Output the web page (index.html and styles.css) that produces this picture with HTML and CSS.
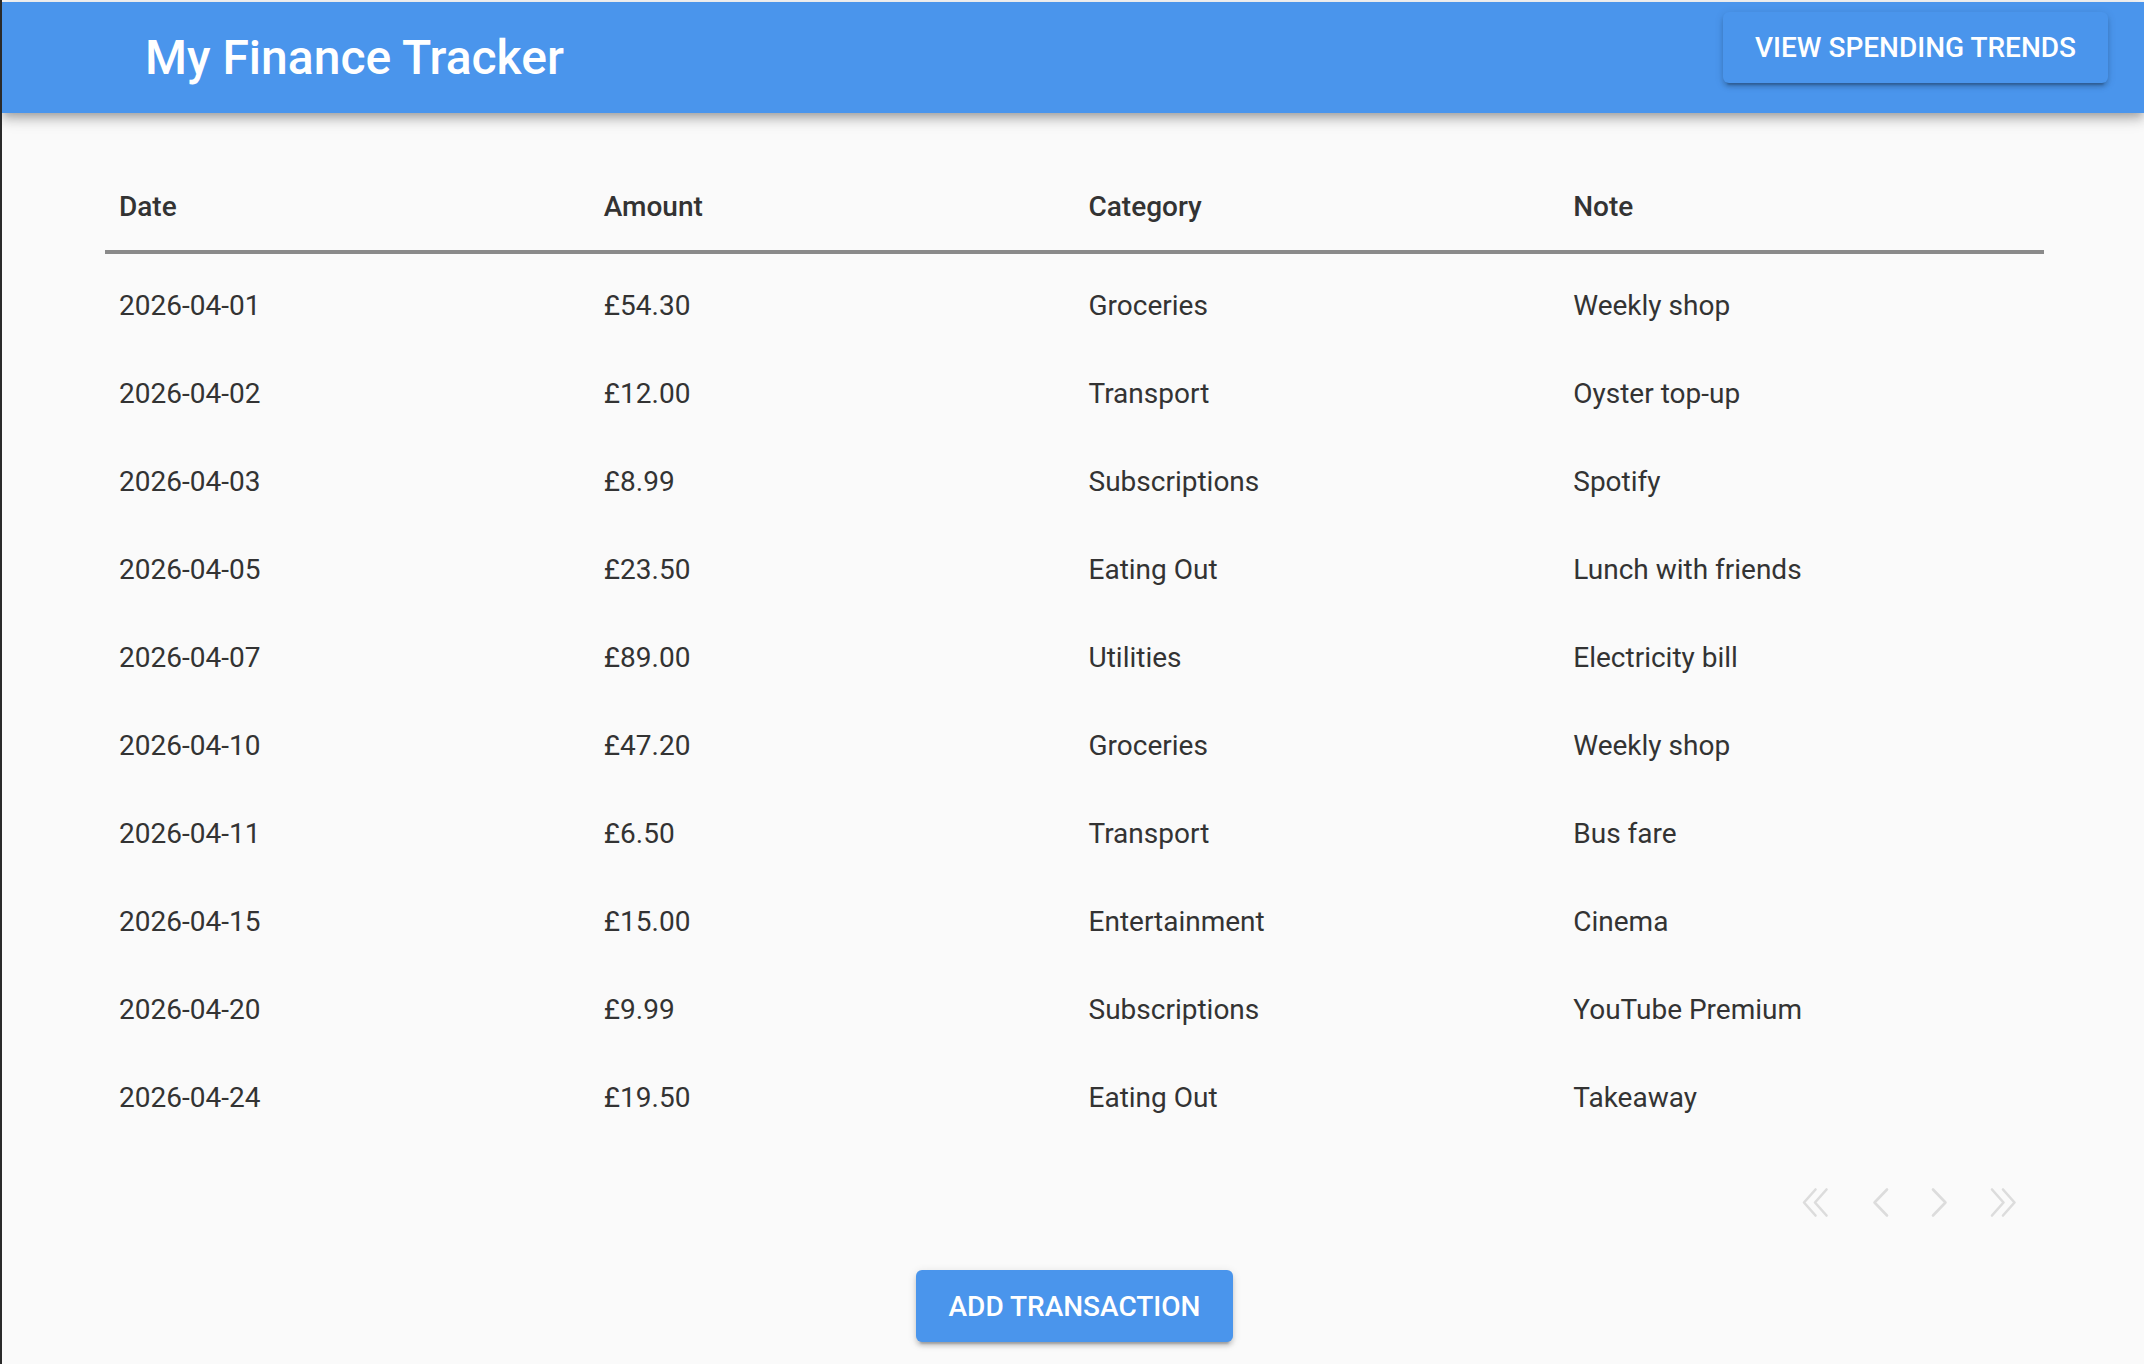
FILE: index.html
```html
<!DOCTYPE html>
<html lang="en">
<head>
<meta charset="utf-8">
<title>My Finance Tracker</title>
<link rel="stylesheet" href="styles.css">
</head>
<body>
<header class="appbar">
  <h1 class="title">My Finance Tracker</h1>
  <button class="btn btn-bar" type="button">View Spending Trends</button>
</header>
<main class="content">
  <div class="table" role="table">
    <div class="row head" role="row">
      <div class="cell" role="columnheader">Date</div>
      <div class="cell" role="columnheader">Amount</div>
      <div class="cell" role="columnheader">Category</div>
      <div class="cell" role="columnheader">Note</div>
    </div>
    <div class="tbody">
      <div class="row" role="row"><div class="cell">2026-04-01</div><div class="cell">£54.30</div><div class="cell">Groceries</div><div class="cell">Weekly shop</div></div>
      <div class="row" role="row"><div class="cell">2026-04-02</div><div class="cell">£12.00</div><div class="cell">Transport</div><div class="cell">Oyster top-up</div></div>
      <div class="row" role="row"><div class="cell">2026-04-03</div><div class="cell">£8.99</div><div class="cell">Subscriptions</div><div class="cell">Spotify</div></div>
      <div class="row" role="row"><div class="cell">2026-04-05</div><div class="cell">£23.50</div><div class="cell">Eating Out</div><div class="cell">Lunch with friends</div></div>
      <div class="row" role="row"><div class="cell">2026-04-07</div><div class="cell">£89.00</div><div class="cell">Utilities</div><div class="cell">Electricity bill</div></div>
      <div class="row" role="row"><div class="cell">2026-04-10</div><div class="cell">£47.20</div><div class="cell">Groceries</div><div class="cell">Weekly shop</div></div>
      <div class="row" role="row"><div class="cell">2026-04-11</div><div class="cell">£6.50</div><div class="cell">Transport</div><div class="cell">Bus fare</div></div>
      <div class="row" role="row"><div class="cell">2026-04-15</div><div class="cell">£15.00</div><div class="cell">Entertainment</div><div class="cell">Cinema</div></div>
      <div class="row" role="row"><div class="cell">2026-04-20</div><div class="cell">£9.99</div><div class="cell">Subscriptions</div><div class="cell">YouTube Premium</div></div>
      <div class="row" role="row"><div class="cell">2026-04-24</div><div class="cell">£19.50</div><div class="cell">Eating Out</div><div class="cell">Takeaway</div></div>
    </div>
  </div>
  <nav class="pager" aria-label="Pagination">
    <button class="pg" type="button" aria-label="First page">
      <svg viewBox="0 0 48 48" width="48" height="48"><polyline points="27.5,10.5 16,23.5 27.5,36.5"/><polyline points="38.5,10.5 27,23.5 38.5,36.5"/></svg>
    </button>
    <button class="pg pg-prev" type="button" aria-label="Previous page">
      <svg viewBox="0 0 48 48" width="48" height="48"><polyline points="30,10.5 17.5,23.5 30,36.5"/></svg>
    </button>
    <button class="pg pg-next" type="button" aria-label="Next page">
      <svg viewBox="0 0 48 48" width="48" height="48"><polyline points="18,10.5 30.5,23.5 18,36.5"/></svg>
    </button>
    <button class="pg pg-last" type="button" aria-label="Last page">
      <svg viewBox="0 0 48 48" width="48" height="48"><polyline points="10,10.5 21.5,23.5 10,36.5"/><polyline points="21,10.5 32.5,23.5 21,36.5"/></svg>
    </button>
  </nav>
  <div class="actions">
    <button class="btn btn-add" type="button">Add Transaction</button>
  </div>
</main>
</body>
</html>
```

FILE: styles.css
```css
* { box-sizing: border-box; }

html, body {
  margin: 0;
  height: 100%;
}

body {
  background: #fafafa;
  border-left: 2px solid #2a2a2a;
  padding-top: 2px;
  font-family: Roboto, "Liberation Sans", Arial, sans-serif;
  color: #333333;
  overflow: hidden;
}

.appbar {
  height: 111px;
  background: #4a95ec;
  display: flex;
  align-items: center;
  justify-content: space-between;
  padding: 0 36px 0 143px;
  box-shadow: 0 4px 8px -2px rgba(0,0,0,0.2), 0 8px 10px 0 rgba(0,0,0,0.14), 0 2px 20px 0 rgba(0,0,0,0.12);
  position: relative;
  z-index: 1;
}

.title {
  margin: 0;
  font-size: 48px;
  font-weight: 500;
  color: #ffffff;
  line-height: 1;
  letter-spacing: 0;
}

.btn {
  font-family: Roboto, "Liberation Sans", Arial, sans-serif;
  font-size: 28px;
  font-weight: 500;
  text-transform: uppercase;
  letter-spacing: 0;
  color: #ffffff;
  background: #4a95ec;
  border: 0;
  border-radius: 6px;
  display: inline-flex;
  align-items: center;
  justify-content: center;
  cursor: pointer;
  box-shadow: 0 6px 2px -4px rgba(0,0,0,0.2), 0 4px 4px 0 rgba(0,0,0,0.14), 0 2px 10px 0 rgba(0,0,0,0.12);
}

.btn-bar {
  align-self: flex-start;
  margin-top: 10px;
  height: 71px;
  padding: 0 32px;
}

.content {
  padding: 47px 100px 0 103px;
}

.row {
  display: grid;
  grid-template-columns: repeat(4, 1fr);
  align-items: center;
  height: 88px;
  font-size: 28px;
}

.cell {
  padding-left: 14px;
  white-space: nowrap;
}

.row.head {
  height: 94px;
  padding-top: 3px;
  border-bottom: 4px solid #8a8a8a;
  font-weight: 500;
}

.tbody {
  padding-top: 7px;
}

.pager {
  display: flex;
  justify-content: flex-end;
  margin-top: 38px;
  padding-right: 14px;
}

.pg {
  width: 48px;
  height: 48px;
  padding: 0;
  border: 0;
  background: transparent;
  display: flex;
  align-items: center;
  justify-content: center;
}

.pg svg {
  display: block;
  fill: none;
  stroke: #dcdcdc;
  stroke-width: 2.6;
  stroke-linecap: round;
  stroke-linejoin: round;
}

.pg-prev { margin-left: 21px; }
.pg-next { margin-left: 10px; }
.pg-last { margin-left: 19px; }

.actions {
  display: flex;
  justify-content: center;
  margin-top: 43px;
}

.btn-add {
  height: 72px;
  padding: 0 33px;
}
```
